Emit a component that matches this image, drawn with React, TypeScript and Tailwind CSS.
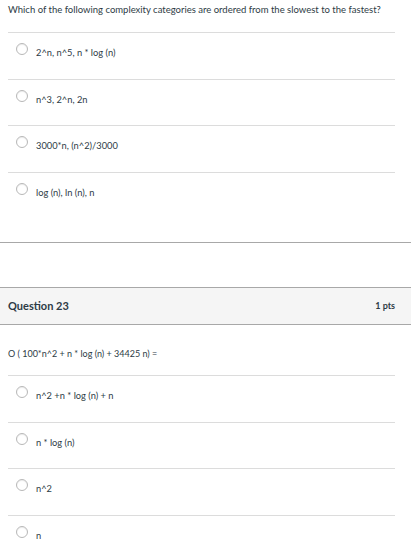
import React from "react";

function Option({ label, h }: { label: string; h: string }) {
  return (
    <div className={`flex items-start border-t border-[#dcdcdc] ${h}`}>
      <div className="ml-[8px] mt-[10px] w-[12px] h-[12px] rounded-full border border-[#b8b8b8] bg-white shadow-[inset_0_1px_1px_rgba(0,0,0,0.08)] shrink-0" />
      <div className="ml-[8px] mt-[14px] text-[9.3px] leading-[11px] whitespace-nowrap">{label}</div>
    </div>
  );
}

export default function App() {
  return (
    <div className="w-[411px] h-[553px] overflow-hidden bg-white text-[#2d3b45] font-['Lato','Noto_Sans',sans-serif]">
      <div className="px-[8px] w-[403px]">
        <div className="h-[32px] pt-[4px] text-[9.5px] leading-[12px] whitespace-nowrap">
          Which of the following complexity categories are ordered from the slowest to the fastest?
        </div>
        <Option label="2^n, n^5, n * log (n)" h="h-[47px]" />
        <Option label="n^3, 2^n, 2n" h="h-[46px]" />
        <Option label="3000*n, (n^2)/3000" h="h-[47px]" />
        <Option label="log (n), ln (n), n" h="h-[70px]" />
      </div>
      <div className="border-t border-[#a8a8a8] h-[45px]" />
      <div className="h-[38px] bg-[#f5f5f5] border-y border-[#a8a8a8] flex items-center justify-between pl-[8px] pr-[16px]">
        <div className="text-[11px] font-bold leading-[14px]">Question 23</div>
        <div className="text-[9px] font-bold leading-[12px]">1 pts</div>
      </div>
      <div className="px-[8px] w-[403px]">
        <div className="h-[50px] pt-[23px] text-[9px] leading-[11px] whitespace-nowrap">
          O ( 100*n^2 + n * log (n) + 34425 n) =
        </div>
        <Option label="n^2 +n * log (n) + n" h="h-[47px]" />
        <Option label="n * log (n)" h="h-[46px]" />
        <Option label="n^2" h="h-[47px]" />
        <Option label="n" h="h-[47px]" />
      </div>
    </div>
  );
}
